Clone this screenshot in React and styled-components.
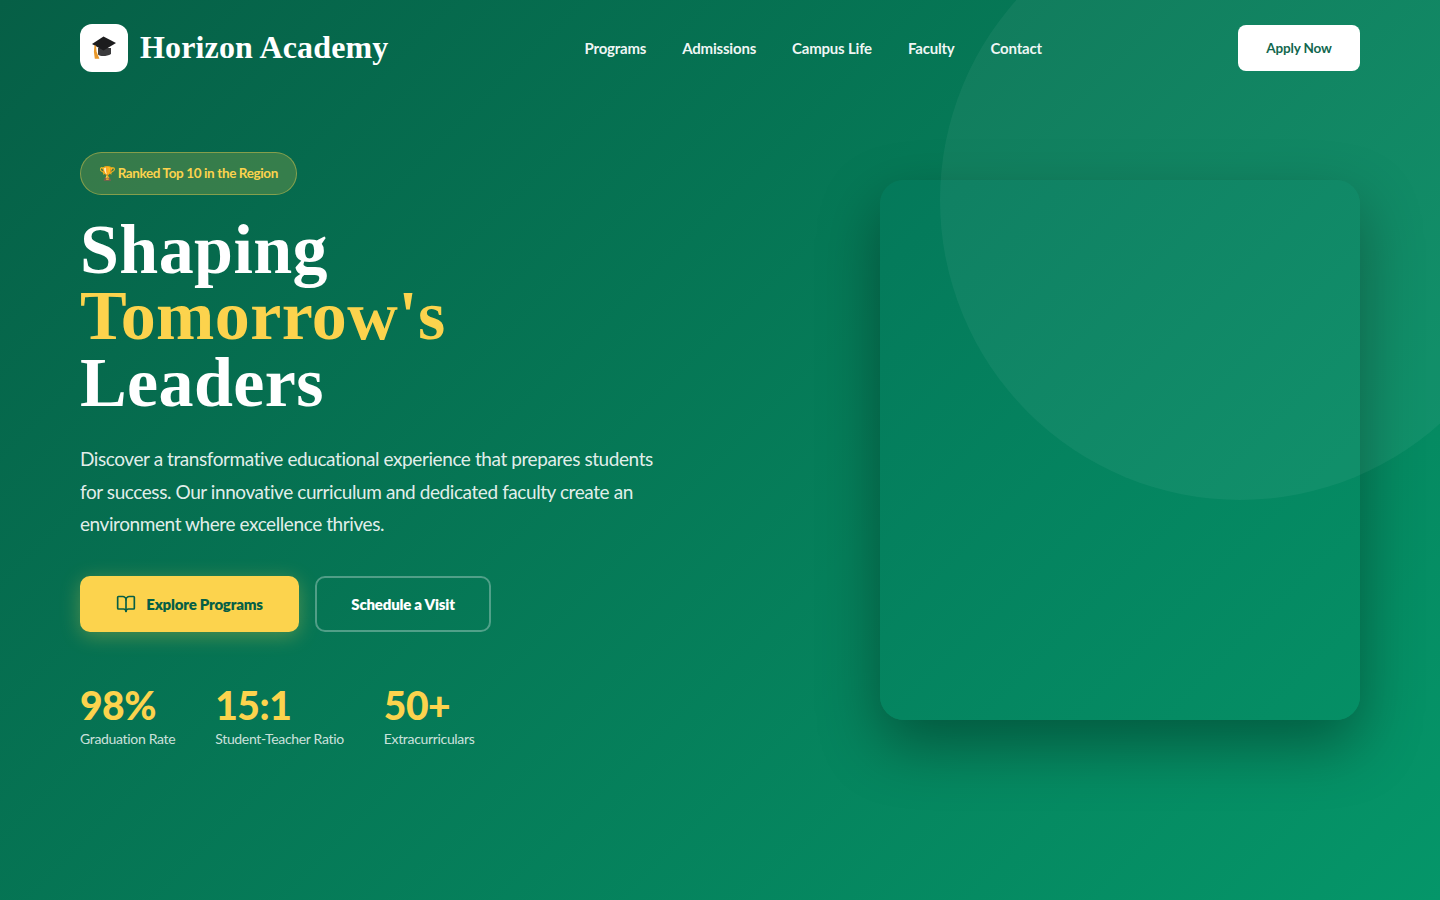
import React from "react";
import styled, { createGlobalStyle } from "styled-components";
import { BookOpen } from "lucide-react";

const GlobalStyle = createGlobalStyle`
    html, body {
        margin: 0;
        padding: 0;
    }
    body {
        font-family: "Lato", "Open Sans", sans-serif;
    }
`;

const Hero = styled("div")`
    position: relative;
    height: 900px;
    overflow: hidden;
    background: linear-gradient(135deg, #065f46 0%, #059669 100%);
`;

const Circle = styled("div")`
    position: absolute;
    top: -100px;
    right: -100px;
    width: 600px;
    height: 600px;
    border-radius: 50%;
    background: rgba(255, 255, 255, 0.05);
    z-index: 2;
    pointer-events: none;
`;

const Nav = styled("nav")`
    display: flex;
    align-items: center;
    justify-content: space-between;
    padding: 24px 80px;
`;

const Brand = styled("div")`
    display: flex;
    align-items: center;
    gap: 12px;
`;

const LogoBox = styled("div")`
    display: flex;
    align-items: center;
    justify-content: center;
    width: 48px;
    height: 48px;
    border-radius: 12px;
    background: #fff;
`;

const BrandName = styled("span")`
    font-family: "Liberation Serif", serif;
    font-size: 32px;
    font-weight: 700;
    letter-spacing: 0.15px;
    line-height: 46px;
    margin-bottom: 2px;
    color: #fff;
`;

const NavLinks = styled("div")`
    display: flex;
    gap: 36px;
`;

const NavLink = styled("a")`
    font-size: 15px;
    font-weight: 700;
    letter-spacing: -0.2px;
    color: rgba(255, 255, 255, 0.95);
`;

const ApplyButton = styled("button")`
    width: 122px;
    height: 46px;
    padding: 0 0 1px;
    border: 0;
    border-radius: 8px;
    background: #fff;
    color: #065f46;
    font-family: inherit;
    font-size: 13.5px;
    font-weight: 700;
    letter-spacing: -0.15px;
`;

const Main = styled("main")`
    display: grid;
    grid-template-columns: 1fr 480px;
    align-items: center;
    height: 708px;
    padding: 0 80px;
`;

const Copy = styled("div")`
    display: flex;
    flex-direction: column;
    align-items: flex-start;
    padding-top: 1px;
`;

const Badge = styled("div")`
    display: flex;
    align-items: center;
    box-sizing: border-box;
    height: 43px;
    padding: 0 18px;
    border: 1px solid rgba(252, 211, 77, 0.4);
    border-radius: 50px;
    background: rgba(252, 211, 77, 0.2);
    color: #fcd34d;
    font-size: 13.5px;
    font-weight: 700;
    letter-spacing: -0.38px;
`;

const Trophy = styled("span")`
    margin-right: 2px;
`;

const Title = styled("h1")`
    margin: 22px 0 27px;
    font-family: "Liberation Serif", serif;
    font-size: 70px;
    font-weight: 700;
    line-height: 66.5px;
    letter-spacing: 0.4px;
    color: #fff;
`;

const Accent = styled("span")`
    display: block;
    color: #fcd34d;
`;

const Lead = styled("p")`
    width: 580px;
    margin: 0 0 36px;
    font-size: 19px;
    line-height: 32.4px;
    letter-spacing: -0.42px;
    color: rgba(255, 255, 255, 0.9);
`;

const Actions = styled("div")`
    display: flex;
    gap: 16px;
    margin-bottom: 51px;
`;

const ActionButton = styled("button")`
    display: flex;
    align-items: center;
    justify-content: center;
    gap: 10px;
    box-sizing: border-box;
    width: ${(p) => p.$width}px;
    height: 56px;
    padding: 0 0 1px;
    border-radius: 10px;
    font-family: inherit;
    font-size: 15px;
    font-weight: 800;
    letter-spacing: -0.2px;
    color: ${(p) => (p.$primary ? "#065f46" : "#fff")};
    background: ${(p) => (p.$primary ? "#fcd34d" : "transparent")};
    border: ${(p) => (p.$primary ? "0" : "2px solid rgba(255, 255, 255, 0.3)")};
    box-shadow: ${(p) => (p.$primary ? "0 4px 20px rgba(252, 211, 77, 0.3)" : "none")};
`;

const Stats = styled("div")`
    display: flex;
    gap: 40px;
`;

const Stat = styled("div")`
    display: flex;
    flex-direction: column;
`;

const StatValue = styled("div")`
    font-size: 39px;
    font-weight: 900;
    line-height: 44px;
    letter-spacing: -0.5px;
    color: #fcd34d;
`;

const StatLabel = styled("div")`
    margin-top: 2px;
    font-size: 14px;
    line-height: 20px;
    letter-spacing: -0.33px;
    color: rgba(255, 255, 255, 0.8);
`;

const Card = styled("div")`
    height: 540px;
    border-radius: 24px;
    background: linear-gradient(135deg, #04795a 0%, #058f65 100%);
    box-shadow: 0 25px 60px rgba(0, 0, 0, 0.35);
`;

const links = ["Programs", "Admissions", "Campus Life", "Faculty", "Contact"];

const stats = [
    { value: "98%", label: "Graduation Rate" },
    { value: "15:1", label: "Student-Teacher Ratio" },
    { value: "50+", label: "Extracurriculars" },
];

const GradCap = () => (
    <svg width="24" height="24" viewBox="0 0 24 24">
        <path d="M6 12v6.5c2.5 2.2 8.5 2.2 13 -.5v-6z" fill="#3a3a3c" />
        <path d="M11.5 0.5L24 7 11.5 14.5 0 8z" fill="#1c1c1e" />
        <path d="M2.5 9l1.5 .8 .6 6 2.8 7h-4.6l-.9-7z" fill="#e8982a" />
    </svg>
);

const App = () => (
    <Hero>
        <GlobalStyle />
        <Circle />
        <Nav>
            <Brand>
                <LogoBox>
                    <GradCap />
                </LogoBox>
                <BrandName>Horizon Academy</BrandName>
            </Brand>
            <NavLinks>
                {links.map((link) => (
                    <NavLink key={link}>{link}</NavLink>
                ))}
            </NavLinks>
            <ApplyButton>Apply Now</ApplyButton>
        </Nav>
        <Main>
            <Copy>
                <Badge>
                    <Trophy>🏆</Trophy>
                    Ranked Top 10 in the Region
                </Badge>
                <Title>
                    Shaping
                    <Accent>Tomorrow's</Accent>
                    Leaders
                </Title>
                <Lead>
                    Discover a transformative educational experience that prepares students for success. Our innovative curriculum and dedicated faculty create an environment where excellence thrives.
                </Lead>
                <Actions>
                    <ActionButton $primary $width={219}>
                        <BookOpen size={20} strokeWidth={2} />
                        Explore Programs
                    </ActionButton>
                    <ActionButton $width={176}>Schedule a Visit</ActionButton>
                </Actions>
                <Stats>
                    {stats.map((stat) => (
                        <Stat key={stat.label}>
                            <StatValue>{stat.value}</StatValue>
                            <StatLabel>{stat.label}</StatLabel>
                        </Stat>
                    ))}
                </Stats>
            </Copy>
            <Card />
        </Main>
    </Hero>
);

export default App;
